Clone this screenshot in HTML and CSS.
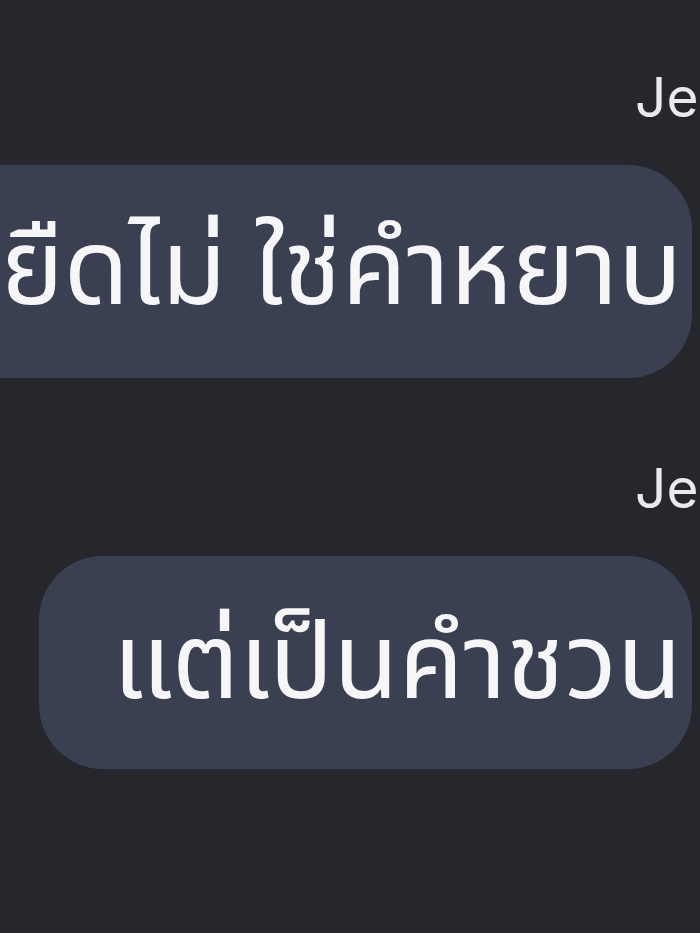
FILE: index.html
```html
<!DOCTYPE html>
<html lang="th">
<head>
  <meta charset="UTF-8" />
  <meta name="viewport" content="width=device-width, initial-scale=1.0" />
  <title>แชท</title>
  <link rel="stylesheet" href="styles.css">
</head>
<body>
  <div class="chat">
    <div class="msg">
      <div class="name">Je</div>
      <div class="bubble bubble-first">ยืดไม่ ใช่คำหยาบ</div>
    </div>
    <div class="msg">
      <div class="name">Je</div>
      <div class="bubble">แต่เป็นคำชวน</div>
    </div>
  </div>
</body>
</html>
```

FILE: styles.css
```css
*,*::before,*::after{box-sizing:border-box;margin:0;padding:0}
html,body{height:100%}
body{background:#26272d;color:#f6f6f8;overflow:hidden;font-family:'Noto Sans','Noto Sans Thai',sans-serif}
.chat{display:flex;flex-direction:column;align-items:flex-end;padding-top:70px;gap:83px}
.msg{display:flex;flex-direction:column;align-items:flex-end}
.name{font-family:Inter,'Liberation Sans',sans-serif;font-size:55px;line-height:1;height:55px;color:#e9e9ee;margin-right:-30px;width:95px;margin-bottom:40px;white-space:nowrap}
.bubble{height:213px;display:flex;align-items:center;background:#3a4051;border-radius:64px;font-size:106px;line-height:1;white-space:pre;padding:0 10px 12px 74px;margin-right:8px;flex-shrink:0}
.bubble-first{border-radius:0 64px 64px 0;padding-left:200px;padding-bottom:18px}
```
